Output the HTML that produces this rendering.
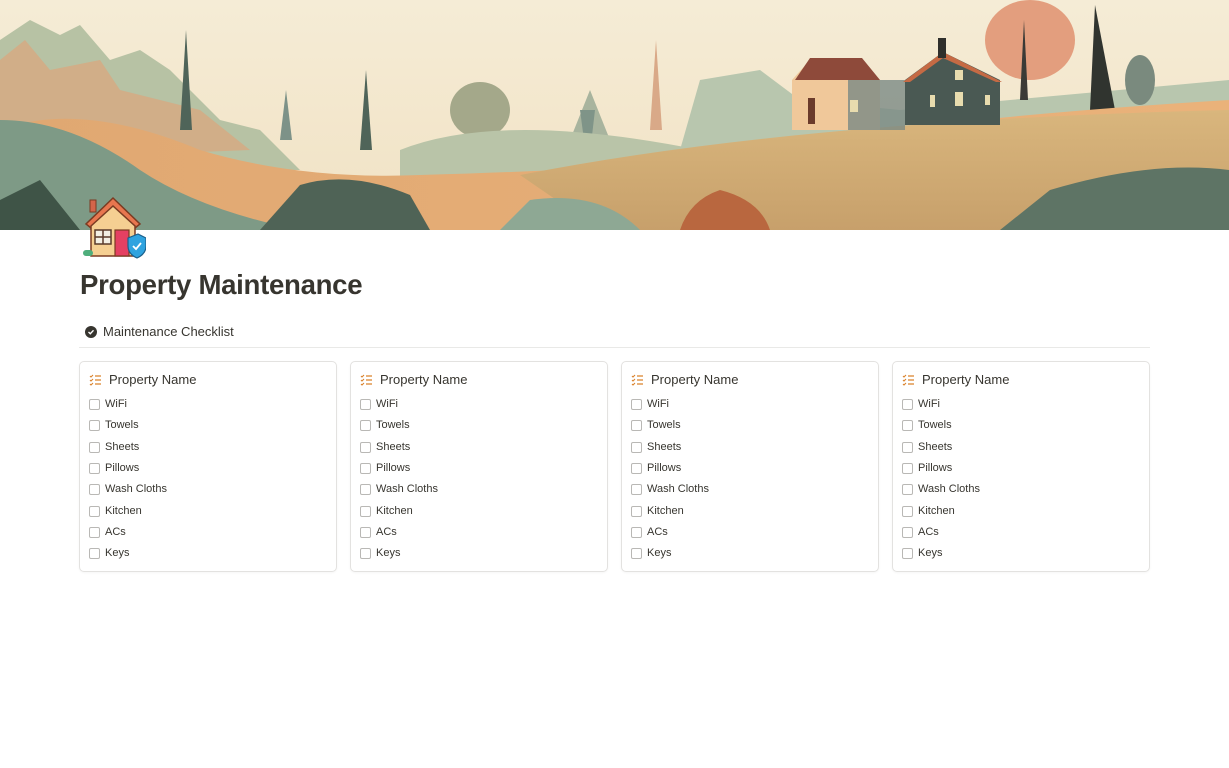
<!DOCTYPE html>
<html><head><meta charset="utf-8"><style>
*{box-sizing:border-box;margin:0;padding:0}
body{width:1229px;height:768px;background:#fff;font-family:"Liberation Sans",sans-serif;color:#37352f;position:relative;overflow:hidden}
.banner{position:absolute;left:0;top:0;width:1229px;height:230px}
.icon{position:absolute;left:80px;top:194px}
h1{position:absolute;left:80px;top:269px;font-size:27.6px;font-weight:700;color:#37352f;letter-spacing:-0.3px}
.tab{position:absolute;left:85px;top:324px;font-size:13px;display:flex;align-items:center;gap:6px;color:#37352f}
.tab .c{width:12px;height:12px;border-radius:50%;background:#37352f;display:flex;align-items:center;justify-content:center}
.div{position:absolute;left:79px;top:347px;width:1071px;height:1px;background:#e9e9e7}
.card{position:absolute;top:361px;width:258px;height:211px;border:1px solid #e3e2e0;border-radius:5px;box-shadow:0 1px 2px rgba(0,0,0,.04)}
.hd{position:absolute;left:9px;top:10px;display:flex;align-items:center;gap:7px;font-size:13px;color:#37352f}
.row{position:absolute;left:9px;display:flex;align-items:center;gap:5px;font-size:11px;color:#37352f}
.cb{width:11px;height:11px;border:1px solid #b9b8b5;border-radius:2px}
</style></head><body>
<svg class="banner" viewBox="0 0 1229 230" preserveAspectRatio="none">
<defs>
<linearGradient id="sky" x1="0" y1="0" x2="0" y2="1"><stop offset="0" stop-color="#f5ecd6"/><stop offset="1" stop-color="#f1e2c4"/></linearGradient>
<linearGradient id="hillL" x1="0" y1="0" x2="1" y2="0"><stop offset="0" stop-color="#e0a872"/><stop offset="1" stop-color="#eab27a"/></linearGradient>
<linearGradient id="field" x1="0" y1="0" x2="0" y2="1"><stop offset="0" stop-color="#d9b67d"/><stop offset="1" stop-color="#c7a06b"/></linearGradient>
</defs>
<rect width="1229" height="230" fill="url(#sky)"/>
<path d="M0 40 L30 20 L60 35 L80 25 L110 60 L140 50 L170 70 L220 120 L260 130 L300 170 L0 170Z" fill="#b7c2a4"/>
<path d="M0 60 L25 40 L50 70 L100 60 L120 90 L200 110 L250 150 L0 160Z" fill="#dba57c" opacity=".7"/>
<path d="M180 130 L186 30 L192 130Z" fill="#4f6459"/>
<path d="M280 140 L286 90 L292 140Z" fill="#7d9288"/>
<path d="M360 150 L366 70 L372 150Z" fill="#4f6459"/>
<path d="M570 140 L590 90 L610 140Z" fill="#a8b49e"/>
<path d="M650 130 L656 40 L662 130Z" fill="#d9a988"/>
<path d="M580 110 L588 170 L595 110Z" fill="#7f9488"/>
<ellipse cx="480" cy="110" rx="30" ry="28" fill="#a4a88a"/>
<path d="M400 150 Q500 110 700 150 L700 190 L400 190Z" fill="#b9c4a8"/>
<path d="M680 150 L700 80 L760 70 L800 100 L900 110 L1229 80 L1229 150Z" fill="#b8c6ae"/>
<ellipse cx="1030" cy="40" rx="45" ry="40" fill="#e39e7e"/>
<path d="M1020 100 L1024 20 L1028 100Z" fill="#3b3a36"/>
<path d="M1090 110 L1095 5 L1115 110Z" fill="#30342f"/>
<ellipse cx="1140" cy="80" rx="15" ry="25" fill="#7a8a7e"/>
<path d="M0 130 Q80 100 200 150 Q300 180 420 175 Q600 170 700 160 Q900 120 1229 100 L1229 230 L0 230Z" fill="url(#hillL)"/>
<path d="M520 175 Q800 120 1229 110 L1229 230 L600 230Z" fill="url(#field)"/>
<path d="M0 120 Q70 120 140 170 Q200 210 300 230 L0 230Z" fill="#7e9a86"/>
<path d="M300 185 Q350 170 410 195 L430 230 L260 230Z" fill="#4f6356"/>
<path d="M530 200 Q600 190 640 230 L500 230Z" fill="#8ea894"/>
<path d="M1050 190 Q1150 160 1229 170 L1229 230 L1000 230Z" fill="#5e7465"/>
<path d="M680 230 Q690 200 720 190 Q760 200 770 230Z" fill="#b9673f"/>
<path d="M0 200 L40 180 L80 230 L0 230Z" fill="#3f5447"/>
<path d="M792 80 L810 60 L860 60 L880 80 L880 130 L792 130Z" fill="#f0c89a"/>
<path d="M795 80 L810 58 L862 58 L880 80Z" fill="#8e4a3a"/>
<path d="M848 80 L880 80 L905 80 L905 130 L848 130Z" fill="#7b8a84" opacity=".8"/>
<rect x="808" y="98" width="7" height="26" fill="#6b3b2b"/>
<path d="M905 80 L943 52 L1000 80 L1000 125 L905 125Z" fill="#4a5953"/>
<path d="M903 82 L943 52 L1002 82 L996 82 L943 58 L910 82Z" fill="#c56a44"/>
<rect x="938" y="38" width="8" height="20" fill="#2f2f2c"/>
<rect x="955" y="70" width="8" height="10" fill="#e8dcae"/>
<rect x="955" y="92" width="8" height="14" fill="#e8dcae"/>
<rect x="930" y="95" width="5" height="12" fill="#e8dcae"/>
<rect x="985" y="95" width="5" height="10" fill="#e8dcae"/>
<rect x="850" y="100" width="8" height="12" fill="#e8dcae"/>
</svg>
<svg class="icon" width="66" height="66" viewBox="0 0 66 66">
<path d="M33 4 L60 30 L55 34 L33 13 L11 34 L6 30Z" fill="#e8764f" stroke="#7a3b22" stroke-width="1.5"/>
<rect x="10" y="6" width="6" height="12" fill="#d4654a" stroke="#7a3b22" stroke-width="1"/>
<path d="M11 32 L33 12 L55 32 L55 62 L11 62Z" fill="#f5cf92" stroke="#7a3b22" stroke-width="1.5"/>
<rect x="15" y="36" width="16" height="14" fill="#f3efe4" stroke="#5a3a2a" stroke-width="1.5"/>
<path d="M23 36 V50 M15 43 H31" stroke="#5a3a2a" stroke-width="1.5"/>
<rect x="35" y="36" width="14" height="26" fill="#e44062" stroke="#7a3b22" stroke-width="1.2"/>
<rect x="3" y="56" width="10" height="6" rx="3" fill="#4fae7c"/>
<path d="M48 44 L58 40 L66 44 L66 52 Q66 60 57 64 Q48 60 48 52Z" fill="#2fa3df" stroke="#1b5f8a" stroke-width="1.2"/>
<path d="M53 52 L56 55 L61 49" stroke="#fff" stroke-width="1.8" fill="none"/>
</svg>
<h1>Property Maintenance</h1>
<div class="tab"><span class="c"><svg width="8" height="8" viewBox="0 0 8 8"><path d="M1.5 4 L3.3 5.7 L6.5 2.3" stroke="#fff" stroke-width="1.4" fill="none"/></svg></span>Maintenance Checklist</div>
<div class="div"></div>
<div class="card" style="left:79px"></div>
<div class="card" style="left:350px"></div>
<div class="card" style="left:621px"></div>
<div class="card" style="left:892px"></div>
<script>
var items=["WiFi","Towels","Sheets","Pillows","Wash Cloths","Kitchen","ACs","Keys"];
var ys=[403,424,446,467,488,510,531,552];
var cards=document.querySelectorAll('.card');
var icon='<svg width="13" height="12" viewBox="0 0 13 12"><path d="M1 2 L2 3 L4 1 M1 6 L2 7 L4 5 M1 10 L2 11 L4 9" stroke="#d9822b" stroke-width="1.1" fill="none"/><path d="M6 2 H12 M6 6 H12 M6 10 H12" stroke="#d9822b" stroke-width="1.2"/></svg>';
cards.forEach(function(c){
 var h='<div class="hd">'+icon+'<span>Property Name</span></div>';
 items.forEach(function(t,i){h+='<div class="row" style="top:'+(ys[i]-361-6)+'px"><span class="cb"></span><span>'+t+'</span></div>';});
 c.innerHTML=h;
});
</script>
</body></html>
